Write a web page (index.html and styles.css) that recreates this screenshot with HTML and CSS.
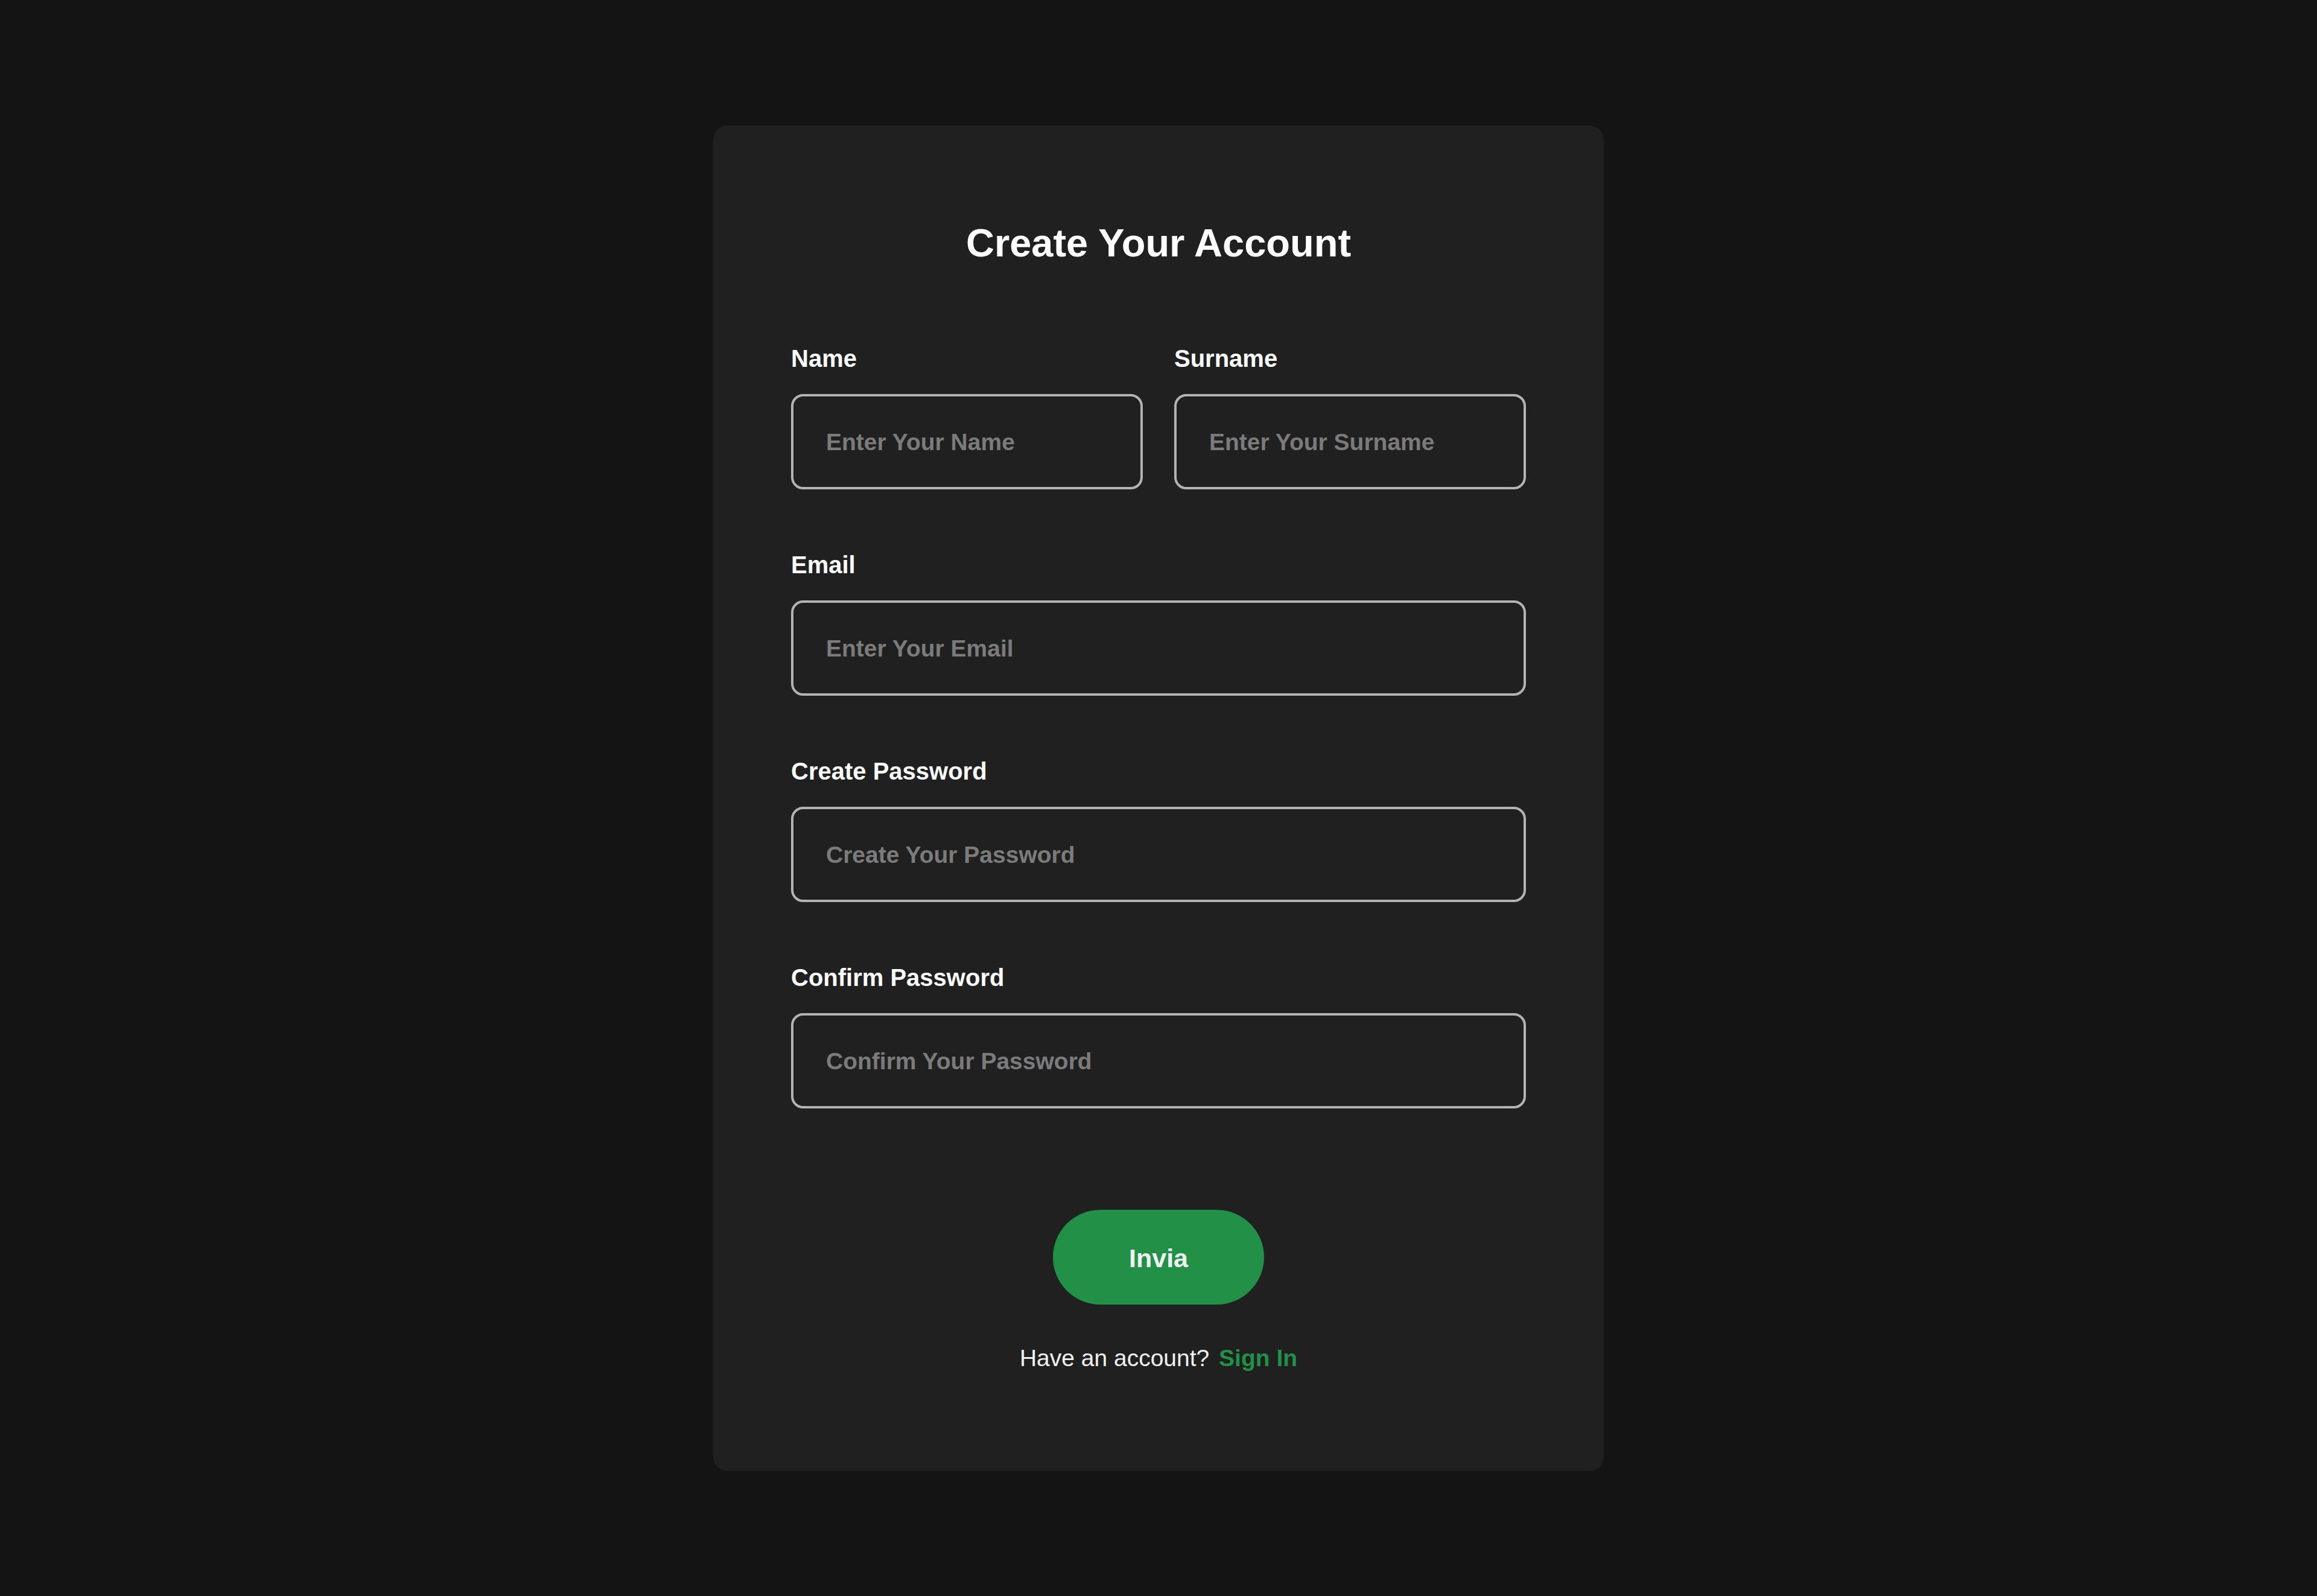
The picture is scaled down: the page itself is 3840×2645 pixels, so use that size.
FILE: index.html
```html
<!DOCTYPE html>
<html lang="en">
<head>
<meta charset="utf-8">
<title>Create Your Account</title>
<link rel="stylesheet" href="styles.css">
</head>
<body>
  <main class="card">
    <h1 class="title">Create Your Account</h1>
    <form class="form">
      <div class="row">
        <label class="field">
          <span class="label">Name</span>
          <input class="input" type="text" placeholder="Enter Your Name">
        </label>
        <label class="field">
          <span class="label">Surname</span>
          <input class="input" type="text" placeholder="Enter Your Surname">
        </label>
      </div>
      <label class="field">
        <span class="label">Email</span>
        <input class="input" type="email" placeholder="Enter Your Email">
      </label>
      <label class="field">
        <span class="label">Create Password</span>
        <input class="input" type="password" placeholder="Create Your Password">
      </label>
      <label class="field">
        <span class="label">Confirm Password</span>
        <input class="input" type="password" placeholder="Confirm Your Password">
      </label>
    </form>
    <div class="actions">
      <button class="button" type="button">Invia</button>
      <p class="footer">Have an account? <a class="link" href="#">Sign In</a></p>
    </div>
  </main>
</body>
</html>
```

FILE: styles.css
```css
html, body {
  margin: 0;
  padding: 0;
}

body {
  background: #141414;
  font-family: "Liberation Sans", Arial, sans-serif;
  min-height: 100vh;
  display: flex;
  align-items: center;
  justify-content: center;
}

.card {
  width: 1476px;
  box-sizing: border-box;
  padding: 163px 129px 168px;
  background: #202020;
  border-radius: 24px;
}

.title {
  margin: 0;
  font-size: 65px;
  line-height: 64px;
  font-weight: 700;
  text-align: center;
  color: #ffffff;
}

.form {
  margin: 139px 0 0;
  display: flex;
  flex-direction: column;
  gap: 105px;
}

.row {
  display: grid;
  grid-template-columns: 1fr 1fr;
  gap: 52px;
}

.field {
  display: flex;
  flex-direction: column;
  gap: 39px;
}

.label {
  font-size: 40px;
  line-height: 40px;
  font-weight: 700;
  color: #ffffff;
}

.input {
  width: 100%;
  height: 158px;
  box-sizing: border-box;
  border: 4px solid #b3b3b3;
  border-radius: 20px;
  background: transparent;
  padding: 3px 54px 0;
  font-family: "Liberation Sans", Arial, sans-serif;
  font-size: 39px;
  font-weight: 700;
  color: #ffffff;
  outline: none;
}

.input::placeholder {
  color: #7b7b7b;
  opacity: 1;
}

.actions {
  margin-top: 168px;
  display: flex;
  flex-direction: column;
  align-items: center;
  gap: 70px;
}

.button {
  width: 350px;
  height: 157px;
  border: none;
  border-radius: 79px;
  background: #209147;
  color: #f0f1f3;
  font-family: "Liberation Sans", Arial, sans-serif;
  font-size: 43px;
  line-height: 1;
  font-weight: 700;
  cursor: pointer;
  padding: 4px 0 0;
}

.footer {
  margin: 0;
  font-size: 39px;
  line-height: 38px;
  color: #f2f2f2;
}

.link {
  margin-left: 5px;
  color: #209147;
  font-weight: 700;
  text-decoration: none;
}
```
